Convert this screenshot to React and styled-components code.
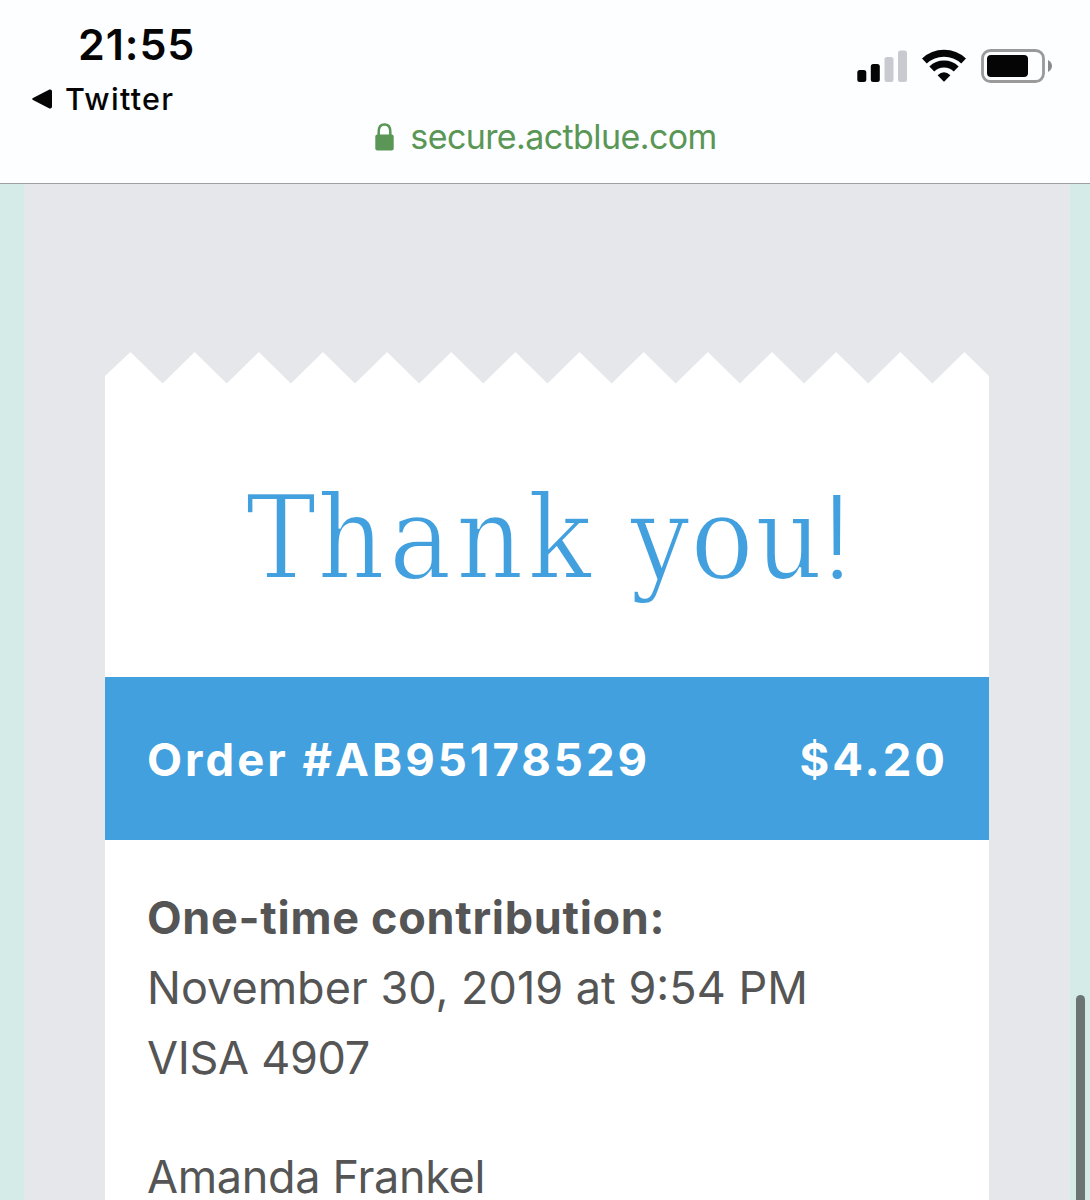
import React from "react";
import styled, { createGlobalStyle } from "styled-components";

const Global = createGlobalStyle`
  *, *::before, *::after { box-sizing: border-box; }
  html, body { margin: 0; padding: 0; }
  body {
    font-family: Inter, "Liberation Sans", sans-serif;
    -webkit-font-smoothing: antialiased;
  }
`;

const Screen = styled.div`
  display: flex;
  flex-direction: column;
  width: 1090px;
  height: 1200px;
  overflow: hidden;
  background: #d4ebe7;
`;

const BrowserBar = styled.header`
  flex: none;
  height: 184px;
  display: flex;
  flex-direction: column;
  background: #fcfeff;
  border-bottom: 1px solid #9da1a3;
`;

const StatusRow = styled.div`
  height: 113px;
  display: flex;
  justify-content: space-between;
`;

const ClockColumn = styled.div`
  display: flex;
  flex-direction: column;
  padding-left: 32px;
  color: #050505;
`;

const Clock = styled.time`
  margin: 18px 0 0 46px;
  font-size: 43px;
  line-height: 52px;
  font-weight: 600;
  letter-spacing: 0.9px;
  white-space: nowrap;
`;

const BackLink = styled.div`
  display: flex;
  align-items: center;
  gap: 13px;
  height: 40px;
  margin-top: 9px;
  font-size: 30.5px;
  line-height: 40px;
  font-weight: 500;
  letter-spacing: 1.3px;
`;

const StatusIcons = styled.div`
  display: flex;
  align-items: flex-start;
  padding: 49px 38px 0 0;
  gap: 15px;
`;

const AddressRow = styled.div`
  display: flex;
  justify-content: center;
  align-items: center;
  gap: 16px;
  height: 48px;
  padding-left: 2px;
  color: #5a9655;
`;

const Address = styled.span`
  font-size: 34px;
  line-height: 48px;
  letter-spacing: -0.6px;
`;

const Page = styled.main`
  position: relative;
  flex: 1;
  min-height: 0;
  margin: 0 20px 0 24px;
  padding: 168px 81px 0;
  background: #e5e7eb;
`;

const Scrollbar = styled.div`
  position: absolute;
  top: 811px;
  right: -15px;
  width: 9px;
  height: 300px;
  border-radius: 5px;
  background: #6b7473;
`;

const Receipt = styled.section`
  display: flex;
  flex-direction: column;
  width: 884px;
`;

const ReceiptBody = styled.div`
  display: flex;
  flex-direction: column;
  background: #fff;
`;

const Title = styled.h1`
  height: 293px;
  margin: 0;
  padding: 79px 0 0 141px;
  font-family: "DejaVu Serif Condensed", "DejaVu Serif", serif;
  font-stretch: condensed;
  font-size: 116.5px;
  line-height: 150px;
  font-weight: 400;
  letter-spacing: 1.2px;
  color: #42a0de;
  -webkit-text-stroke: 1.8px #fff;
  white-space: nowrap;
`;

const Loose = styled.span`
  letter-spacing: 4.4px;
`;

const Bang = styled.span`
  font-family: Roboto, sans-serif;
  font-stretch: normal;
  font-weight: 300;
  line-height: 1;
  -webkit-text-stroke: 0;
`;

const OrderBar = styled.div`
  display: flex;
  justify-content: space-between;
  align-items: center;
  height: 163px;
  padding: 2px 41px 0 42px;
  background: #42a0de;
  color: #fff;
  font-size: 45.5px;
  font-weight: 700;
  letter-spacing: 3px;
  white-space: nowrap;
`;

const Details = styled.div`
  padding: 43px 42px 0;
  color: #555;
  font-size: 45px;
  line-height: 70px;
`;

const Line = styled.p`
  margin: 0 0 ${(p) => p.$gap || 0}px;
  font-weight: ${(p) => (p.$strong ? 700 : 400)};
  letter-spacing: ${(p) => p.$track || 0}px;
  white-space: nowrap;
`;

const TOOTH = 64.15;

function TornEdge() {
  let d = "M0 32V24L25.5 0";
  for (let i = 0; i < 13; i++) {
    d += `L${25.5 + TOOTH * (i + 0.5)} 31.5L${25.5 + TOOTH * (i + 1)} 0`;
  }
  d += "L884 24V32Z";
  return (
    <svg width="884" height="32" viewBox="0 0 884 32" display="block">
      <path d={d} fill="#fff" />
    </svg>
  );
}

const BackArrow = () => (
  <svg width="20" height="20" viewBox="0 0 20 20">
    <path d="M1 9Q-.6 10 1 11L17.5 19.4Q20 20 20 17.5V2.5Q20 0 17.5.6Z" fill="#050505" />
  </svg>
);

const Signal = () => (
  <svg width="50" height="33" viewBox="0 0 50 33">
    <rect x="0.3" y="21" width="9" height="12" rx="2.5" fill="#050505" />
    <rect x="13.8" y="15" width="9" height="18" rx="2.5" fill="#050505" />
    <rect x="27.5" y="8" width="9" height="25" rx="2.5" fill="#c9cad1" />
    <rect x="41" y="1.5" width="9" height="31.5" rx="2.5" fill="#c9cad1" />
  </svg>
);

const Wifi = () => (
  <svg width="44" height="33" viewBox="0 0 44 33">
    <g fill="none" stroke="#050505" strokeWidth="7">
      <path d="M2.4 12A28.5 28.5 0 0 1 41.6 12" />
      <path d="M9.8 20A17.5 17.5 0 0 1 34.2 20" />
    </g>
    <path d="M15.6 26.3Q22 20.3 28.4 26.3L22.6 32.2Q22 32.8 21.4 32.2Z" fill="#050505" />
  </svg>
);

const Battery = () => (
  <svg width="71" height="34" viewBox="0 0 71 34">
    <rect x="1.5" y="1.5" width="61" height="31" rx="8" fill="none" stroke="#9a9a9a" strokeWidth="2.8" />
    <rect x="6" y="6" width="41" height="22" rx="4" fill="#050505" />
    <path d="M67 11Q71 13.5 71 17T67 23Z" fill="#8a8a8a" />
  </svg>
);

const Lock = () => (
  <svg width="19" height="28" viewBox="0 0 19 28">
    <path d="M3.7 13V8.5Q3.7 1.5 9.5 1.5T15.3 8.5V13" fill="none" stroke="#5a9655" strokeWidth="2.5" />
    <rect x="0.3" y="11.5" width="18.4" height="16" rx="2" fill="#5a9655" />
  </svg>
);

export default function App() {
  return (
    <>
      <Global />
      <Screen>
        <BrowserBar>
          <StatusRow>
            <ClockColumn>
              <Clock>21:55</Clock>
              <BackLink>
                <BackArrow />
                <span>Twitter</span>
              </BackLink>
            </ClockColumn>
            <StatusIcons>
              <Signal />
              <Wifi />
              <Battery />
            </StatusIcons>
          </StatusRow>
          <AddressRow>
            <Lock />
            <Address>secure.actblue.com</Address>
          </AddressRow>
        </BrowserBar>
        <Page>
          <Receipt>
            <TornEdge />
            <ReceiptBody>
              <Title>
                T<Loose>hank</Loose> you<Bang>!</Bang>
              </Title>
              <OrderBar>
                <span>Order #AB95178529</span>
                <span>$4.20</span>
              </OrderBar>
              <Details>
                <Line $strong $track={0.7}>One-time contribution:</Line>
                <Line>November 30, 2019 at 9:54 PM</Line>
                <Line $gap={49} $track={-0.3}>VISA 4907</Line>
                <Line $track={-0.33}>Amanda Frankel</Line>
              </Details>
            </ReceiptBody>
          </Receipt>
          <Scrollbar />
        </Page>
      </Screen>
    </>
  );
}
